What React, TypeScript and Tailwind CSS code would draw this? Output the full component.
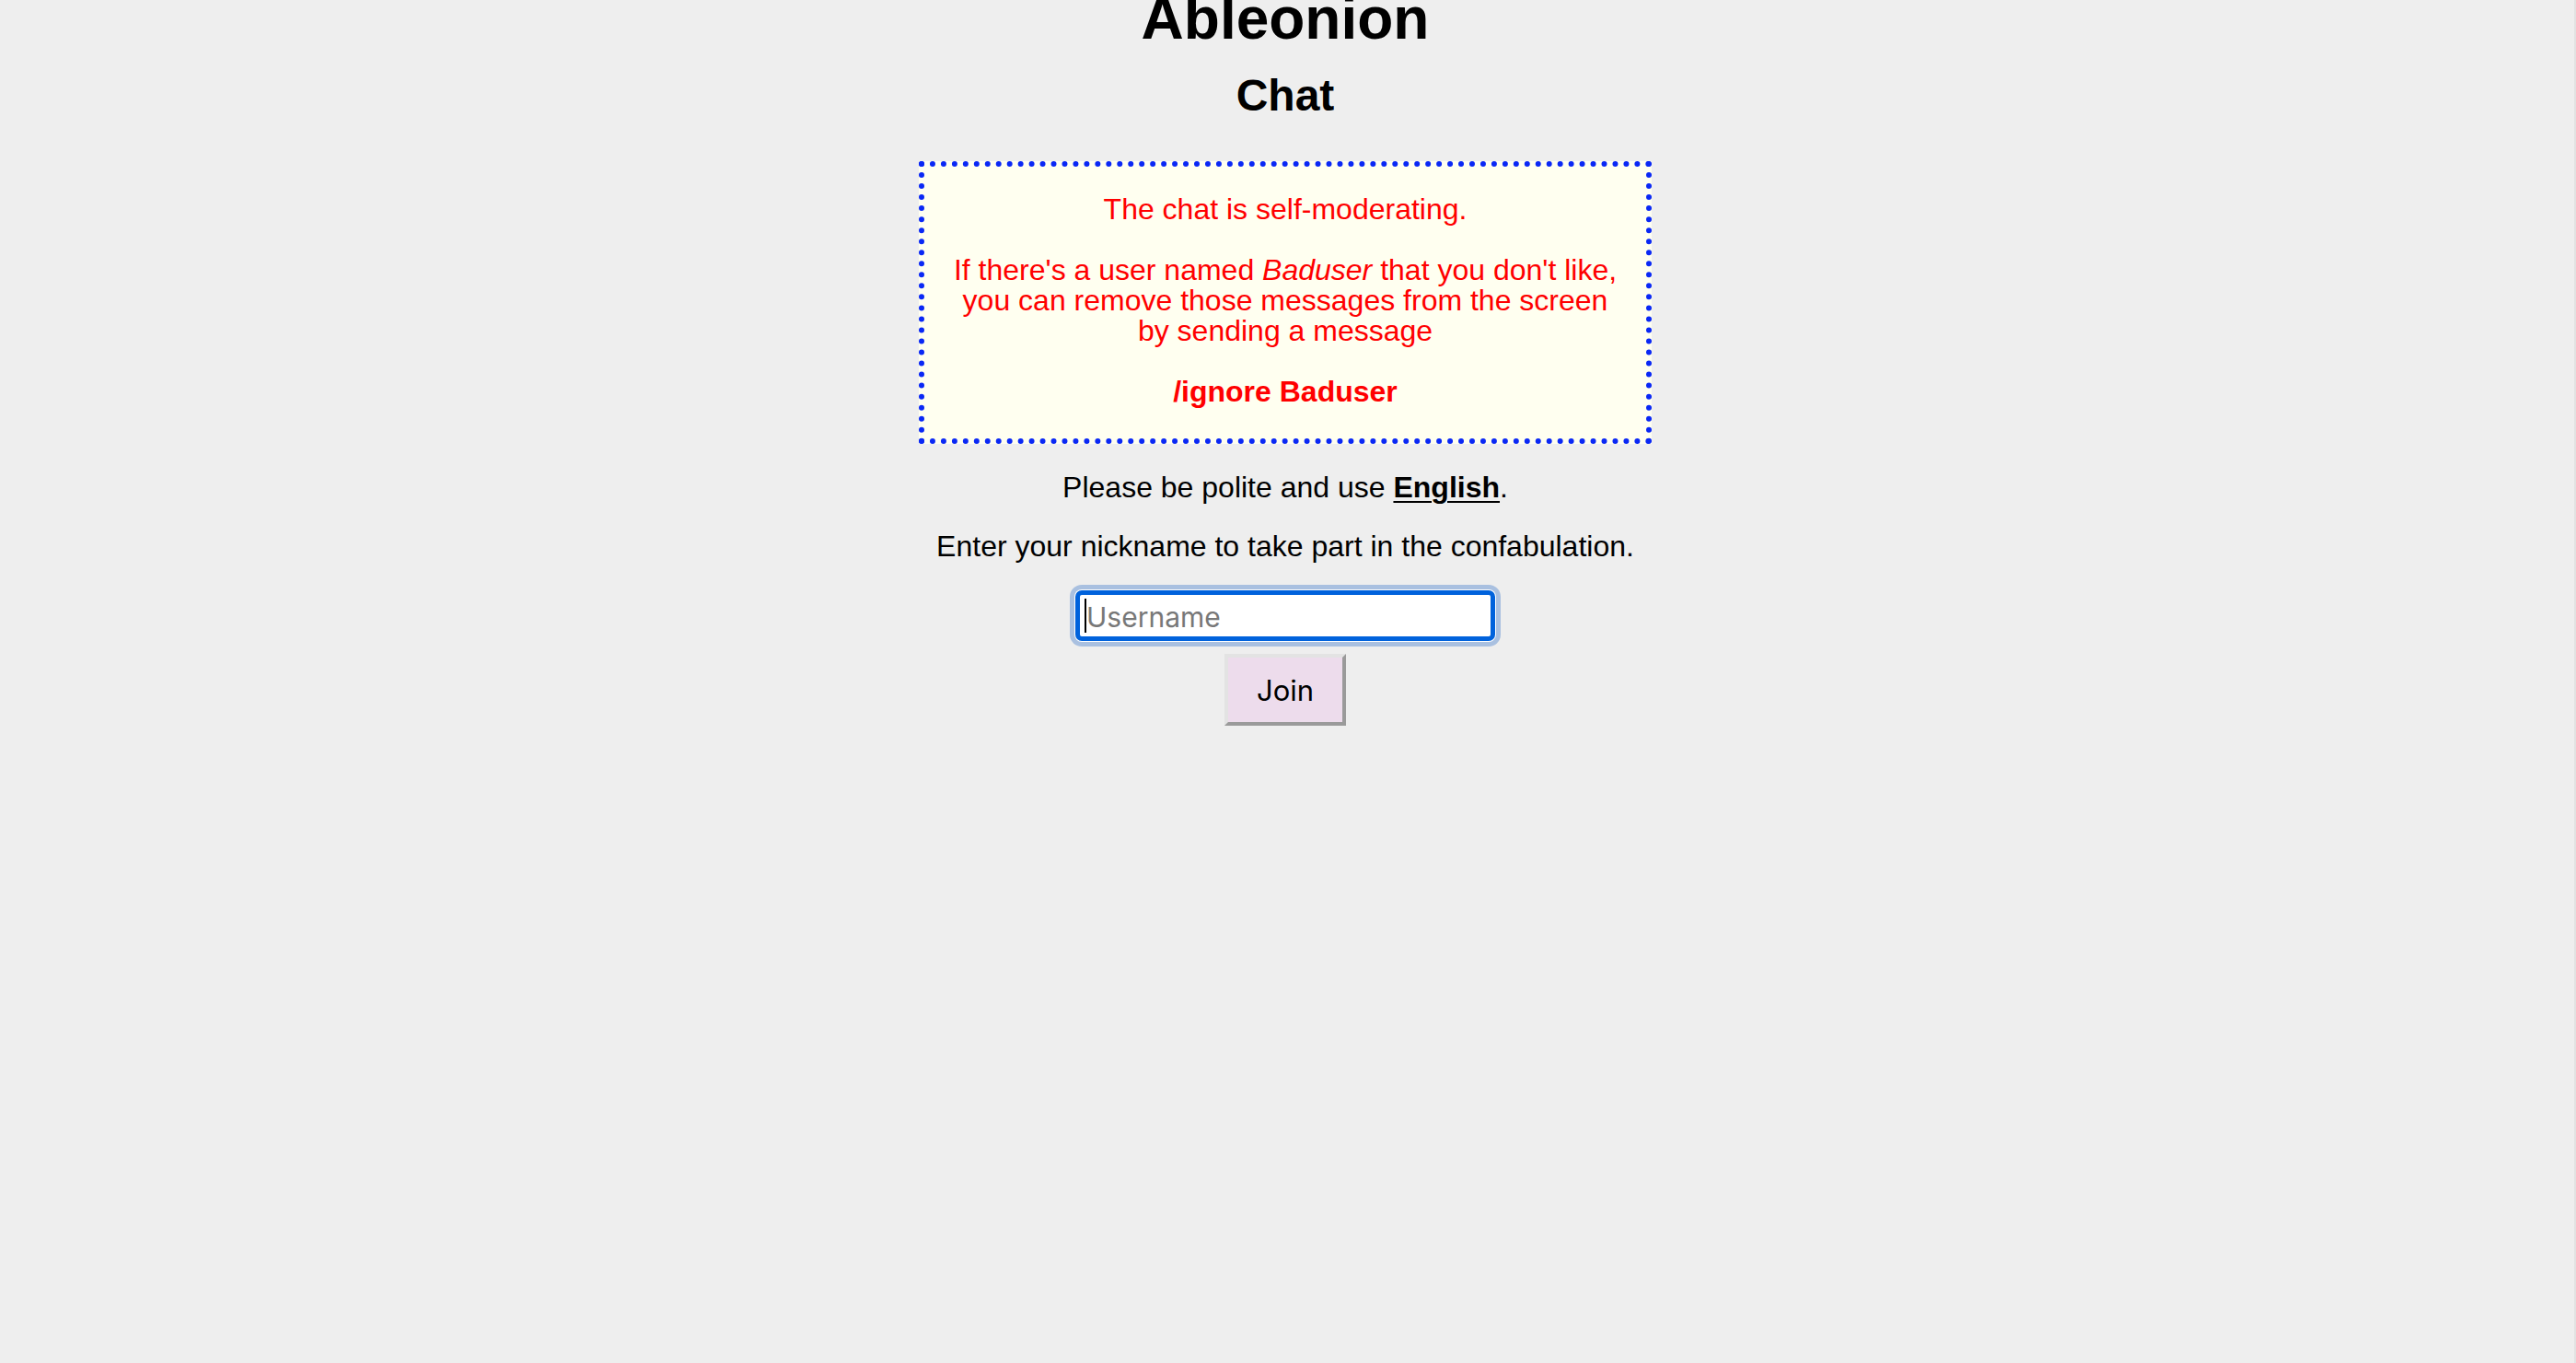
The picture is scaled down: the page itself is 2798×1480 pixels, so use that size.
export default function App() {
  return (
    <div className="min-h-screen bg-[#eeeeee] border-r-[2px] border-[#e2e2e2] pr-[4px] font-['Liberation_Sans',Arial,sans-serif] text-black">
      <div className="flex flex-col items-center">
        <h1 className="mt-[-12px] text-[64px] leading-[64px] font-bold">Ableonion</h1>
        <h2 className="mt-[28px] text-[48px] leading-[48px] font-bold">Chat</h2>

        <div className="mt-[47px] w-[796px] border-[6px] border-dotted border-[#0a28f5] bg-[#fffff0] px-[20px] pt-[30px] pb-[34px] text-center text-[32px] leading-[33px] text-[#ff0000]">
          <p>The chat is self-moderating.</p>
          <p className="mt-[33px]">
            If there's a user named <i>Baduser</i> that you don't like,
            <br />
            you can remove those messages from the screen
            <br />
            by sending a message
          </p>
          <p className="mt-[33px] font-bold">/ignore Baduser</p>
        </div>

        <p className="mt-[31px] text-[32px] leading-[33px]">
          Please be polite and use <b className="underline decoration-[2px] underline-offset-[4px]">English</b>.
        </p>
        <p className="mt-[31px] text-[32px] leading-[33px]">
          Enter your nickname to take part in the confabulation.
        </p>

        <div className="relative mt-[31px] h-[55px] w-[456px] rounded-[7px] border-[5px] border-[#0062dc] bg-white shadow-[0_0_0_1px_#ffffff,0_0_0_6px_#a9c0e0]">
          <span className="absolute left-[5px] top-[4px] h-[37px] w-[2px] bg-black" />
          <input
            type="text"
            placeholder="Username"
            className="h-full w-full bg-transparent pl-[7px] pt-[2px] font-['Inter',sans-serif] text-[30px] text-black outline-none placeholder:text-[#787878]"
          />
        </div>

        <button className="mt-[14px] h-[78px] w-[132px] border-[4px] border-t-[#e3e3e3] border-l-[#e3e3e3] border-b-[#9a9a9a] border-r-[#9a9a9a] bg-[#eddcec] pt-[3px] font-['Inter',sans-serif] text-[31px] text-black">
          Join
        </button>
      </div>
    </div>
  )
}
